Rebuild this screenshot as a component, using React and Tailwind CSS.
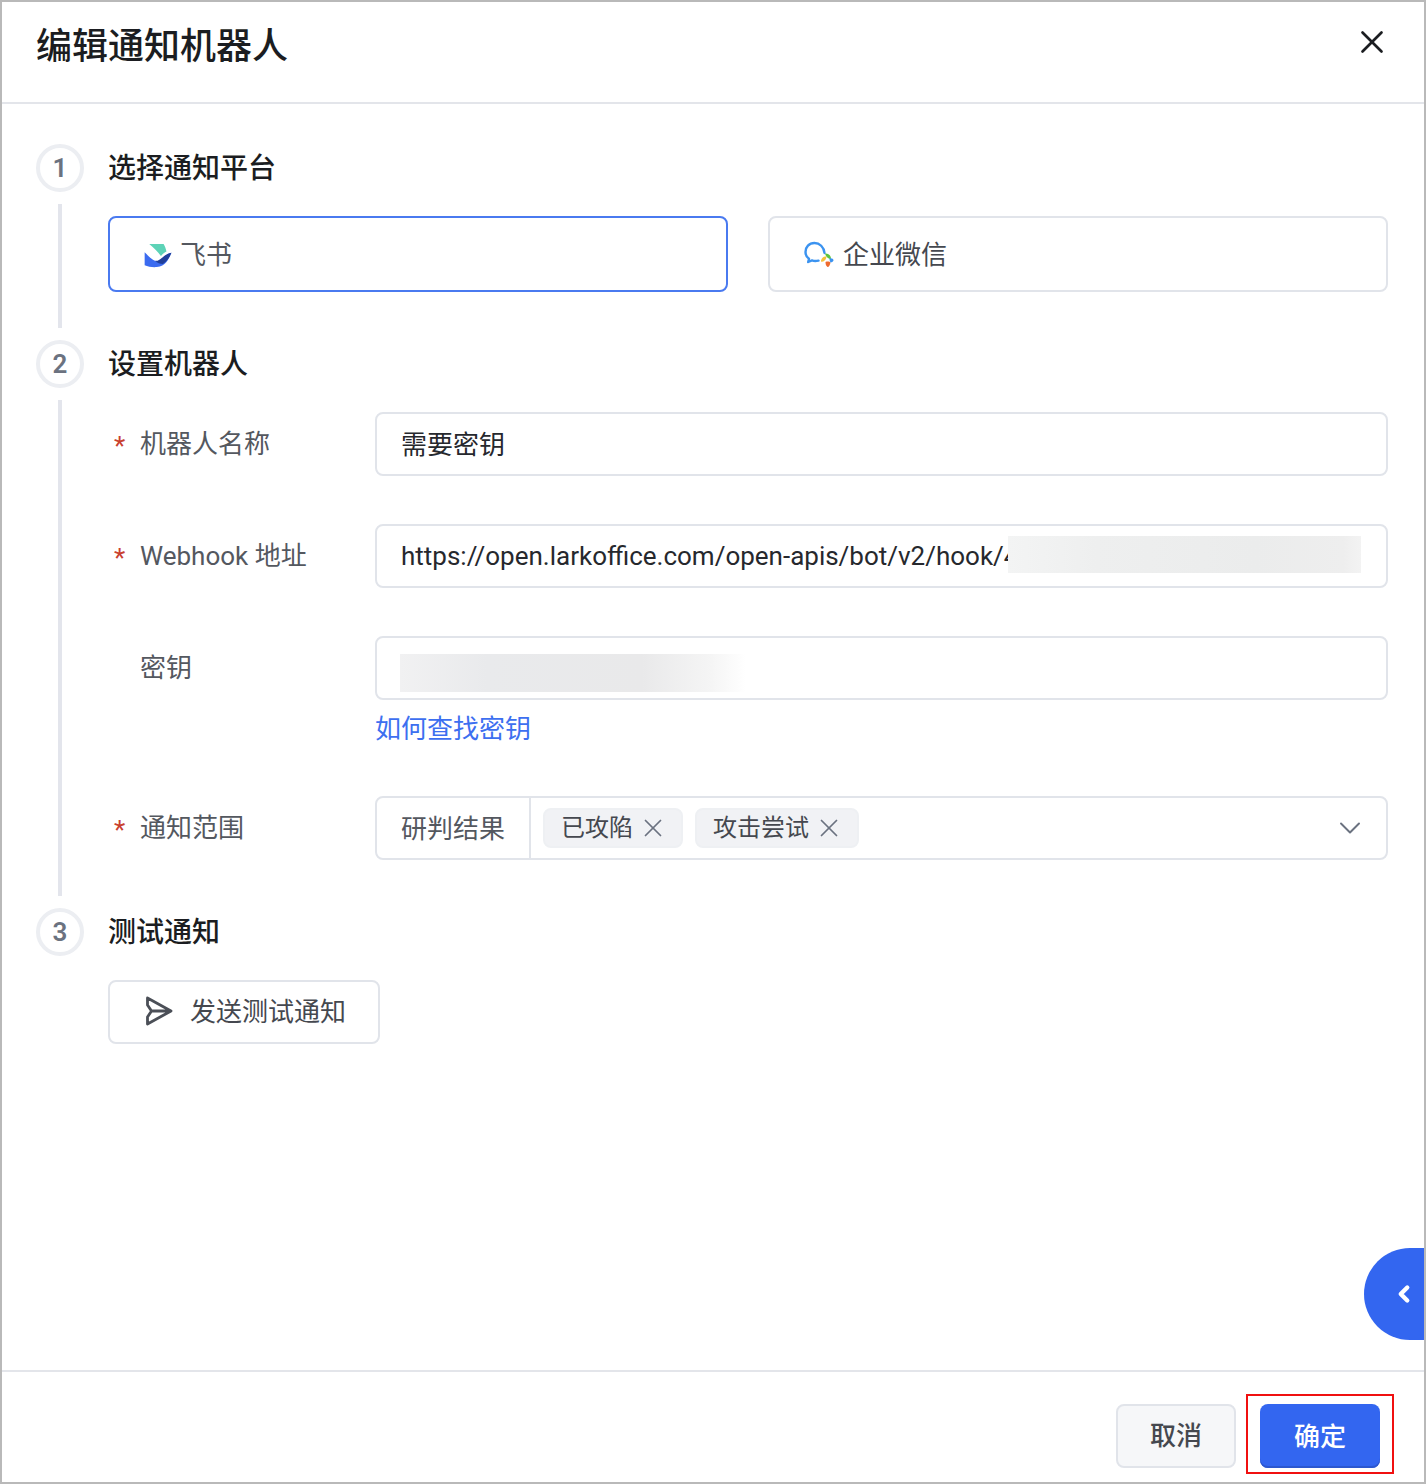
import React from "react";
import { X, ChevronDown, ChevronLeft } from "lucide-react";

const FONT = "font-['Roboto','Noto_Sans_CJK_SC',sans-serif]";

const FeishuLogo = () => (
  <svg width="29" height="24" viewBox="0 0 30 26" className="mt-[3px] shrink-0">
    <path d="M5 0H20.5C22 2.5 23 5 23.6 8.2C21.6 9.2 19.6 11 17.6 13C14.6 9 10 4 5 0Z" fill="#5dd3b7" />
    <path d="M0 9C4 13 9 18.5 13.4 18.6C19 18.8 21 11 29 9.4C26.6 15 23.4 24 13.2 25C9 25.5 3.6 24.6 0 23Z" fill="#3b6bf0" />
    <path d="M11.4 18.1C17 19.6 20.5 10.6 29 9.4C27.4 13.4 25 18.6 19.8 21.6C16.6 21.6 13.8 20.4 11.4 18.1Z" fill="#203f9b" />
  </svg>
);

const WecomLogo = () => (
  <svg width="32" height="28" viewBox="0 0 32 28" fill="none" className="shrink-0">
    <path
      d="M21.5 13C21 7 16.5 3 11.5 3C6 3 2.5 7 2.5 12C2.5 15 4 17.5 6 18.8L5.2 22L9 20.4C10.5 21 13 21.2 15.5 20.6"
      stroke="#3b93f0"
      strokeWidth="2.4"
      strokeLinecap="round"
      strokeLinejoin="round"
    />
    <path d="M18 20.5C19 17 21 16 23.5 16.5C23.5 19 21 22.5 18 21.5Z" fill="#f4c33e" />
    <path d="M22 13.5C25 13 28 15 28 19C25.5 19 23 17.5 22 13.5Z" fill="#5ec43f" />
    <path d="M22.5 22C25 21 27 22 27.5 22.5C27 25 26 27 24.5 27C23 26 22.5 24 22.5 22Z" fill="#ee6a2e" />
    <path d="M26.5 18.5C28.5 18 30.5 19 30.5 20.2C30.5 21.4 29 22.4 27.5 22.4C26.8 21 26.5 20 26.5 18.5Z" fill="#3b93f0" />
  </svg>
);

const SendIcon = () => (
  <svg width="28" height="30" viewBox="0 0 28 30" fill="none" className="mb-[2px] shrink-0">
    <path
      d="M2.5 2L26 15L2.5 28V21L6.5 15L2.5 9ZM6.5 15H26"
      stroke="#4b4f57"
      strokeWidth="2.8"
      strokeLinejoin="round"
    />
  </svg>
);

const Step = ({ num, title, last, children }) => (
  <div className="flex gap-6">
    <div className="flex w-12 shrink-0 flex-col items-center">
      <div className="flex h-12 w-12 items-center justify-center rounded-full border-4 border-[#eceef2] text-[26px] font-semibold text-[#6b7280]">
        {num}
      </div>
      {!last && <div className="my-3 w-1 flex-1 bg-[#e3e5ec]" />}
    </div>
    <div className={`min-w-0 flex-1 ${last ? "" : "pb-12"}`}>
      <div className="flex h-12 items-center pt-[2px] text-[28px] font-medium text-[#1b1d21]">{title}</div>
      <div className="mt-6">{children}</div>
    </div>
  </div>
);

const FormRow = ({ label, required, children }) => (
  <div className="grid grid-cols-[267px_1fr]">
    <div className="flex h-16 items-center pl-[6px] text-[26px] text-[#54585f]">
      <span className="w-[26px] pt-1 text-[26px] text-[#c9402f]">{required ? "*" : ""}</span>
      <span>{label}</span>
    </div>
    <div>{children}</div>
  </div>
);

const Tag = ({ text, className }) => (
  <div className={`flex h-10 items-center rounded-lg border-2 border-[#eef0f3] bg-[#f1f2f5] pl-4 text-[24px] text-[#45484f] ${className}`}>
    <span>{text}</span>
    <X size={30} strokeWidth={1.4} className="ml-[5px] shrink-0 text-[#6b7280]" />
  </div>
);

export default function App() {
  return (
    <div className={`relative flex h-[1484px] w-[1426px] flex-col overflow-hidden border-2 border-[#b9b9b9] bg-white ${FONT}`}>
      <header className="flex h-[102px] shrink-0 items-center justify-between border-b-2 border-[#e3e5ea] pb-[10px] pl-[34px] pr-[36px]">
        <h1 className="text-[36px] font-medium text-[#1b1d21]">编辑通知机器人</h1>
        <X size={38} strokeWidth={1.7} className="mb-[10px] mr-[-3px] text-[#1b1d21]" />
      </header>

      <main className="flex-1 pl-[34px] pr-[36px] pt-10">
        <Step num="1" title="选择通知平台">
          <div className="grid grid-cols-2 gap-10">
            <div className="flex h-[76px] items-center rounded-lg border-2 border-[#4a7af0] pl-[34px] text-[26px] text-[#54585f]">
              <FeishuLogo />
              <span className="ml-[7px] pt-[2px]">飞书</span>
            </div>
            <div className="flex h-[76px] items-center rounded-lg border-2 border-[#e1e4ea] pl-[33px] text-[26px] text-[#45484f]">
              <WecomLogo />
              <span className="ml-[8px] pt-[2px]">企业微信</span>
            </div>
          </div>
        </Step>

        <Step num="2" title="设置机器人">
          <div className="flex flex-col gap-12">
            <FormRow label="机器人名称" required>
              <div className="flex h-16 items-center rounded-lg border-2 border-[#e1e4ea] pl-6 pt-[2px] text-[26px] text-[#26282d]">
                需要密钥
              </div>
            </FormRow>
            <FormRow label="Webhook 地址" required>
              <div className="relative flex h-16 items-center overflow-hidden rounded-lg border-2 border-[#e1e4ea] pl-6 text-[26px] whitespace-nowrap text-[#26282d]">
                https://open.larkoffice.com/open-apis/bot/v2/hook/4
                <div className="absolute left-[631px] top-[10px] h-[37px] w-[353px] bg-[linear-gradient(to_right,#f3f4f4,#eeefef_25%,#ebecec_70%,#eeeeee_95%,#f3f3f3)]" />
              </div>
            </FormRow>
            <FormRow label="密钥">
              <div className="flex h-16 items-center rounded-lg border-2 border-[#e1e4ea] pl-[23px]">
                <div className="mt-[10px] h-[38px] w-[346px] bg-[linear-gradient(to_right,#f1f1f2,#e9eaec_25%,#e9e9ea_70%,#f5f5f5_90%,#ffffff)]" />
              </div>
              <a className="mb-1 mt-[14px] block text-[26px] leading-[30px] text-[#3d6ff0]">如何查找密钥</a>
            </FormRow>
            <FormRow label="通知范围" required>
              <div className="flex h-16 items-center rounded-lg border-2 border-[#e1e4ea] text-[26px]">
                <div className="flex h-full w-[154px] shrink-0 items-center border-r-2 border-[#e1e4ea] pl-6 pt-[2px] text-[#54585f]">
                  研判结果
                </div>
                <div className="flex flex-1 items-center gap-3 pl-3 pr-[18px]">
                  <Tag text="已攻陷" className="w-[140px]" />
                  <Tag text="攻击尝试" className="w-[164px]" />
                  <ChevronDown size={36} strokeWidth={1.3} className="ml-auto text-[#6b7280]" />
                </div>
              </div>
            </FormRow>
          </div>
        </Step>

        <Step num="3" title="测试通知" last>
          <button className="flex h-16 w-[272px] items-center rounded-lg border-2 border-[#e1e4ea] pl-[35px] text-[26px] text-[#45484f]">
            <SendIcon />
            <span className="ml-[17px]">发送测试通知</span>
          </button>
        </Step>
      </main>

      <footer className="flex h-[112px] shrink-0 items-start justify-end gap-6 border-t-2 border-[#e3e5ea] pr-[44px] pt-8">
        <button className="h-16 w-[120px] rounded-lg border-2 border-[#e1e4ea] bg-[#f6f7f9] pt-[1px] text-[26px] font-medium text-[#45484f]">
          取消
        </button>
        <button className="h-16 w-[120px] rounded-lg bg-[#3366f0] pt-[2px] text-[26px] font-medium text-white shadow-[inset_0_-2px_0_#2c57cf]">
          确定
        </button>
      </footer>

      <div className="absolute right-0 top-[1246px] flex h-[92px] w-[60px] items-center justify-end rounded-l-[46px] bg-[#3366f0] pr-[7px]">
        <ChevronLeft size={26} strokeWidth={4} className="text-white" />
      </div>
      <div className="absolute left-[1244px] top-[1392px] h-[80px] w-[148px] border-2 border-[#f01010]" />
    </div>
  );
}
